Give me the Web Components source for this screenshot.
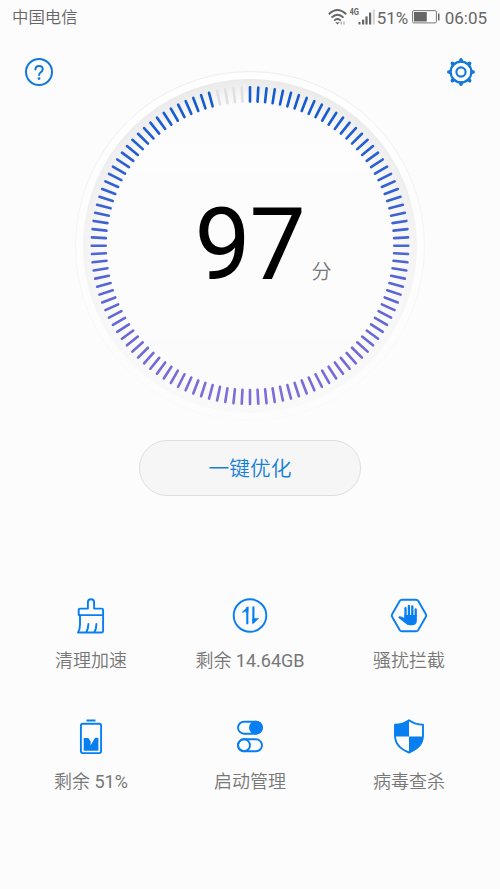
<!DOCTYPE html>
<html lang="zh-CN">
<head>
<meta charset="utf-8">
<title>手机管家</title>
<style>
html,body{margin:0;height:100%}
body{background:#fcfcfc;font-family:Roboto,"Noto Sans CJK SC",sans-serif;overflow:hidden}
</style>
</head>
<body>
<phone-manager></phone-manager>
<script>
const define = (name, html, setup) => customElements.define(name, class extends HTMLElement {
  connectedCallback() {
    if (this.shadowRoot) return;
    const t = document.createElement('template');
    t.innerHTML = typeof html === 'function' ? html(this) : html;
    this.attachShadow({ mode: 'open' }).append(t.content.cloneNode(true));
    if (setup) setup(this, this.shadowRoot);
  }
});

const icons = {
  help: [28, `<circle cx="14" cy="14" r="13" stroke-width="2"/><path d="M10.400 11.500c0-2.300 1.500-3.600 3.700-3.600s3.600 1.400 3.600 3.400c0 2.900-3.600 2.900-3.600 5.700" stroke-width="2"/><circle cx="14" cy="20.600" r="1.400" fill="currentColor" stroke="none"/>`],
  gear: [28, `<circle cx="14" cy="14" r="10.400" stroke-width="2.200"/><circle cx="14" cy="14" r="4.600" stroke-width="2.100"/><g stroke="none" fill="currentColor">${[0,45,90,135,180,225,270,315].map(a=>`<path transform="rotate(${a} 14 14)" d="M10 4.500Q12.400 3.600 12.200 1.800 12.200 0 14 0T15.800 1.800Q15.600 3.600 18 4.500z"/>`).join('')}</g>`],
  brush: [36, `<path d="M5.700 17.100V12q0-1.400 1.400-1.400H14.900V4.300a3.100 3.100 0 0 1 6.200 0V10.600H28.700q1.400 0 1.400 1.400V33q0 1.500-1.500 1.500H5q2-3 2-8V17M5.700 17.100H30.100M13.300 34q2-3 2.100-8M21.400 34q2-3 2-8" stroke-width="1.900"/>`],
  data: [36, `<circle cx="18" cy="17.500" r="16.300" stroke-width="1.900"/><path d="M15.300 9V26.200M21.400 8.500V25" stroke-width="2.100" stroke-linecap="butt"/><path d="M9.600 14.600 16.350 8V14.600H13.500V12.900L11.700 14.600zM20.350 20.200H27.200L20.350 26.500z" fill="currentColor" stroke="none"/>`],
  hand: [38, `<path d="M12 1.700H26Q27.500 1.700 28.300 3L35.900 16.300Q36.600 17.500 35.900 18.700L28.300 32Q27.500 33.300 26 33.300H12Q10.500 33.300 9.700 32L2.100 18.700Q1.400 17.500 2.100 16.300L9.700 3Q10.500 1.700 12 1.700Z" stroke-width="1.900"/><path d="M15.500 19V10.200M18.900 17V8M22.300 17V8.500M25.700 18V11.500" stroke-width="2.300"/><path d="M14.350 17H26.850V22.500Q26.850 27.200 22 27.200H20Q17 27.200 15 25L8.700 20Q7.900 18.900 9.300 18.300 11 17.800 14.350 20z" fill="currentColor" stroke="none"/>`],
  battery: [36, `<path d="M13.500 1.500H22.500" stroke-width="2" stroke-linecap="butt"/><rect x="7.900" y="4.800" width="20.200" height="29.300" rx="2" stroke-width="1.900"/><path d="M10.700 19H15.300L17.700 22.400 17.500 26.400 22.100 18.800H25.400V31.800H10.700z" fill="currentColor" stroke="none"/>`],
  switches: [36, `<rect x="6" y="2.700" width="24" height="12" rx="6" stroke-width="1.900"/><circle cx="23.900" cy="8.700" r="6.900" fill="currentColor" stroke="none"/><rect x="6" y="20.300" width="24" height="12" rx="6" stroke-width="1.900"/><circle cx="12" cy="26.300" r="6" stroke-width="1.900"/>`],
  shield: [36, `<path d="M18 1.200Q24 5.500 32 5.800V16.500Q32 28 18 33.500Q4 28 4 16.500V5.800Q12 5.500 18 1.200Z" stroke-width="1.900"/><path d="M18 1.200V17.400H4V5.800Q12 5.500 18 1.200ZM18 17.400H32Q31.500 28 18 33.500Z" fill="currentColor" stroke="none"/>`]
};

define('ui-icon', el => {
  const [w, art] = icons[el.getAttribute('name')];
  const h = w === 28 ? 28 : 36;
  return `<style>:host{display:block;width:${w}px;height:${h}px;color:${w === 28 ? '#1478d8' : '#087ff0'}}svg{display:block}</style>
  <svg width="${w}" height="${h}" viewBox="0 0 ${w} ${h}" fill="none" stroke="currentColor" stroke-linecap="round" stroke-linejoin="round">${art}</svg>`;
});

define('status-bar', `
<style>
:host{display:flex;align-items:center;height:34px;padding:0 13px 0 12px;box-sizing:border-box;color:#666;font-size:17px;line-height:34px}
.carrier{font-size:16.400px;font-weight:350;flex:1;padding-top:1px}
svg{display:block}
.pct{width:35px;padding-top:1px}
.time{margin-left:5px;padding-top:1px}
.wifi{margin-right:3px}
</style>
<span class="carrier">中国电信</span>
<svg class="wifi" width="19" height="16" viewBox="0 0 19 16" fill="none" stroke="#666" stroke-width="1.900"><path d="M.8 5.300Q9.500-3.200 18.200 5.300M3.500 8.600Q9.500 2.800 15.500 8.600M6.200 11.600Q9.500 8.300 12.800 11.600"/><path d="M9.500 15.500 7.300 13.200H11.700z" fill="#666" stroke="none"/><path d="M13.300 12.500V15.500M16 12.500V15.500" stroke-width="1.200" stroke="#aaa"/></svg>
<svg width="27" height="18" viewBox="0 0 27 18"><text x="-.5" y="7" font-family="Roboto" font-size="8.800" font-weight="700" textLength="9.500" lengthAdjust="spacingAndGlyphs" fill="#666">4G</text><g fill="#666"><rect x="8.500" y="14" width="2" height="2.500"/><rect x="12" y="11.600" width="2.200" height="4.900"/><rect x="15.400" y="8.400" width="2.200" height="8.100"/><rect x="19" y="4.500" width="2.200" height="12"/><rect x="22.800" y="1.500" width="2" height="15" fill="#d3d3d3"/></g></svg>
<span class="pct">51%</span>
<svg width="28" height="14" viewBox="0 0 28 14"><rect x=".6" y=".6" width="23.800" height="12.300" rx="1.300" fill="none" stroke="#777"/><rect x="2" y="2" width="12.800" height="9.500" fill="#666"/><rect x="26" y="3.500" width="1.500" height="7" fill="#666"/></svg>
<span class="time">06:05</span>`);

define('tool-bar', `
<style>:host{display:flex;justify-content:space-between;padding:24px 25px 0;height:12px}</style>
<ui-icon name="help"></ui-icon><ui-icon name="gear"></ui-icon>`);

define('score-dial', `
<style>
:host{display:grid;width:352px;height:352px;margin:0 auto}
svg,.score{grid-area:1/1}
.score{display:flex;align-items:baseline;padding:116px 0 0 120.500px;line-height:117px;font-size:100px;color:#000}
.num{letter-spacing:-1.200px}
small{font-size:20px;color:#777;font-weight:350;margin-left:7px;padding-top:1px}
</style>
<svg width="352" height="352" viewBox="0 0 352 352">
<defs>
<linearGradient id="fade" x1="0" y1="0" x2="0" y2="1"><stop offset="0" stop-color="#fff"/><stop offset=".25" stop-color="#ccc"/><stop offset=".5" stop-color="#777"/><stop offset=".8" stop-color="#383838"/><stop offset="1" stop-color="#222"/></linearGradient>
<mask id="m"><rect width="352" height="352" fill="url(#fade)"/></mask>
<radialGradient id="band" gradientUnits="userSpaceOnUse" cx="176" cy="176" r="167"><stop offset=".86" stop-color="#e9e9e9" stop-opacity="0"/><stop offset=".95" stop-color="#e9e9e9" stop-opacity=".75"/><stop offset="1" stop-color="#e9e9e9"/></radialGradient>
</defs>
<g mask="url(#m)"><circle cx="176" cy="176" r="174.500" fill="#fefefe" stroke="#ececec"/><circle cx="176" cy="176" r="167" fill="#fcfcfc"/><circle cx="176" cy="176" r="167" fill="url(#band)"/></g>
<g id="ticks" stroke-width="2.600" stroke-linecap="round"></g></svg>
<div class="score"><span class="num"><slot></slot></span><small><slot name="unit"></slot></small></div>`,
(el, root) => {
  const group = root.getElementById('ticks');
  const lit = Math.round(Number(el.textContent.match(/\d+/)[0]) * 1.2);
  const top = [18, 91, 208], bottom = [128, 108, 216];
  for (let i = 0; i < 120; i++) {
    const a = i * Math.PI / 60, s = Math.sin(a), c = -Math.cos(a);
    const l = document.createElementNS('http://www.w3.org/2000/svg', 'line');
    l.setAttribute('x1', 176 + 144.3 * s); l.setAttribute('y1', 175.7 + 144.3 * c);
    l.setAttribute('x2', 176 + 158.3 * s); l.setAttribute('y2', 175.7 + 158.3 * c);
    const k = (c + 1) / 2;
    l.setAttribute('stroke', i < lit ? `rgb(${top.map((v, n) => Math.round(v + (bottom[n] - v) * k))})` : '#e0e0e0');
    group.append(l);
  }
});

define('pill-button', `
<style>:host{display:block;width:222px;margin:18px auto 0}
button{display:block;box-sizing:border-box;width:100%;height:56px;border:1px solid #dedede;border-radius:28px;background:#f6f6f6;color:#157fd8;font:350 20.700px/56px Roboto,"Noto Sans CJK SC",sans-serif;padding:0}</style>
<button><slot></slot></button>`);

define('feature-item', el => `
<style>:host{display:flex;flex-direction:column;align-items:center;height:121px;color:#777;font-size:18px;font-weight:350;line-height:26px;white-space:nowrap}
span{margin-top:14px}
::slotted(b){font-weight:400}</style>
<ui-icon name="${el.getAttribute('icon')}"></ui-icon><span><slot></slot></span>`);

define('feature-grid', `
<style>:host{display:grid;grid-template-columns:repeat(3,159px);justify-content:center;margin-top:102px}</style><slot></slot>`);

define('phone-manager', `
<style>:host{display:flex;flex-direction:column;height:889px;overflow:hidden}
status-bar,tool-bar,score-dial,pill-button,feature-grid{flex:none}</style>
<status-bar></status-bar>
<tool-bar></tool-bar>
<score-dial>97<span slot="unit">分</span></score-dial>
<pill-button>一键优化</pill-button>
<feature-grid>
<feature-item icon="brush">清理加速</feature-item>
<feature-item icon="data">剩余 <b>14.64GB</b></feature-item>
<feature-item icon="hand">骚扰拦截</feature-item>
<feature-item icon="battery">剩余 <b>51%</b></feature-item>
<feature-item icon="switches">启动管理</feature-item>
<feature-item icon="shield">病毒查杀</feature-item>
</feature-grid>`);
</script>
</body>
</html>
